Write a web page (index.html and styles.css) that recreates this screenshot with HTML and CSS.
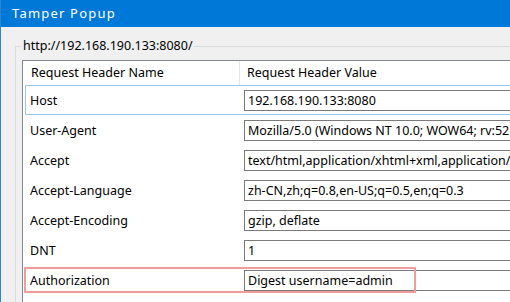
FILE: index.html
```html
<!DOCTYPE html>
<html>
  <head>
    <title>Tamper Popup</title>
    <link rel="stylesheet" href="styles.css">
  </head>
  <body>
    <div class="window">
      <div class="titlebar">Tamper Popup</div>
      <div class="group">
        <div class="legend">http://192.168.190.133:8080/</div>
        <div class="headers">
          <div class="head_row">
            <div class="head_cell name_col">Request Header Name</div>
            <div class="head_cell">Request Header Value</div>
          </div>
          <div class="row selected">
            <div class="label">Host</div>
            <div class="value">192.168.190.133:8080</div>
          </div>
          <div class="row">
            <div class="label">User-Agent</div>
            <div class="value">Mozilla/5.0 (Windows NT 10.0; WOW64; rv:52.0) Gecko/20100101 Firefox/52.0</div>
          </div>
          <div class="row">
            <div class="label">Accept</div>
            <div class="value">text/html,application/xhtml+xml,application/xml;q=0.9,*/*;q=0.8</div>
          </div>
          <div class="row">
            <div class="label">Accept-Language</div>
            <div class="value">zh-CN,zh;q=0.8,en-US;q=0.5,en;q=0.3</div>
          </div>
          <div class="row">
            <div class="label">Accept-Encoding</div>
            <div class="value">gzip, deflate</div>
          </div>
          <div class="row">
            <div class="label">DNT</div>
            <div class="value">1</div>
          </div>
          <div class="row marked">
            <span class="mark"></span>
            <div class="label">Authorization</div>
            <div class="value">Digest username=admin</div>
          </div>
        </div>
      </div>
    </div>
  </body>
</html>
```

FILE: styles.css
```css
/* tamper data popup window */
body {
  margin: 0;
  overflow: hidden;
  font-family: "Noto Sans", "DejaVu Sans", sans-serif;
  font-size: 12.5px;
  color: #000;
}

.window {
  height: 302px;
  width: 509px;
  border-left: 1px solid #2b87d6;
  background-color: #f0f0f0;
  overflow: hidden;
}

.titlebar {
  height: 27px;
  line-height: 26px;
  padding-left: 11px;
  font-size: 13px;
  letter-spacing: 1.2px;
  background-color: #0078d7;
  color: #fff;
}

.group {
  margin: 19px 0 0 14px;
  width: 600px;
  height: 300px;
  border-top: 1px solid #dcdcdc;
  border-left: 1px solid #dcdcdc;
  padding-left: 6px;
}

.legend {
  width: fit-content;
  margin-top: -9px;
  padding: 0 1px;
  height: 16px;
  line-height: 16px;
  background-color: #f0f0f0;
}

.headers {
  margin-top: 6px;
  border: 1px solid #828790;
  border-right: 0;
  background-color: #fff;
  height: 300px;
}

.head_row {
  display: flex;
  height: 24px;
  line-height: 24px;
}

.head_cell {
  padding-left: 7px;
}

.name_col {
  width: 208px;
  padding-left: 8px;
  border-right: 1px solid #e5e5e5;
}

.row {
  position: relative;
  display: flex;
  align-items: center;
  height: 28px;
  margin-left: 2px;
  border: 1px solid transparent;
}

.selected {
  border-color: #99c9ef;
  border-right-color: transparent;
}

.label {
  width: 214px;
  padding-left: 4px;
  flex-shrink: 0;
}

.value {
  align-self: flex-start;
  margin-top: 4px;
  width: 320px;
  height: 19px;
  line-height: 19px;
  padding-left: 3px;
  border: 1px solid #7a7a7a;
  white-space: nowrap;
  overflow: hidden;
}

/* red annotation round the authorization row */
.mark {
  position: absolute;
  left: -2px;
  top: 1px;
  width: 392px;
  height: 26px;
  box-sizing: border-box;
  border: 2px solid #f29b9b;
}
```
